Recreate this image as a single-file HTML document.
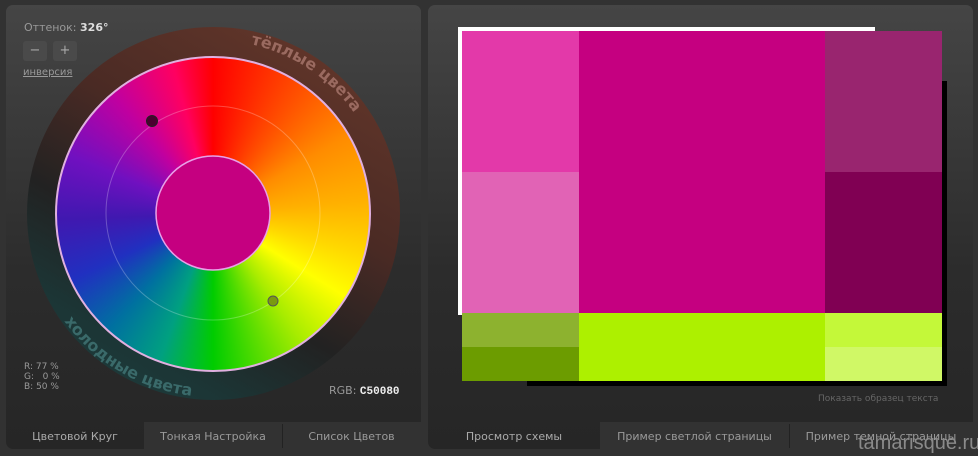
<!DOCTYPE html>
<html><head><meta charset="utf-8"><style>
*{margin:0;padding:0;box-sizing:border-box}
body{width:978px;height:456px;background:#323232;position:relative;overflow:hidden;font-family:"DejaVu Sans","Liberation Sans",sans-serif}
.panel{position:absolute;top:5px;border-radius:7px;background:linear-gradient(#454545,#2c2c2c 60%,#262626)}
.abs{position:absolute}
.tab{position:absolute;top:422px;height:27px;font-size:11px;color:#9a9a9a;text-align:center;line-height:29px}
.btn{position:absolute;top:41px;width:24px;height:20px;background:#4a4a4a;border-radius:3px;color:#aaa;font-size:13px;text-align:center;line-height:20px}
</style></head><body>
<div class="panel" style="left:6px;width:415px;height:444px"></div>
<div class="panel" style="left:428px;width:545px;height:444px"></div>

<div class="abs" style="left:144px;top:422px;width:277px;height:30px;background:#323232"></div>
<div class="abs" style="left:282px;top:424px;width:1px;height:24px;background:#222"></div>
<div class="tab" style="left:6px;width:138px;color:#aaa">Цветовой Круг</div>
<div class="tab" style="left:144px;width:138px">Тонкая Настройка</div>
<div class="tab" style="left:282px;width:139px">Список Цветов</div>
<div class="abs" style="left:600px;top:422px;width:373px;height:30px;background:#323232"></div>
<div class="abs" style="left:789px;top:424px;width:1px;height:24px;background:#222"></div>
<div class="tab" style="left:428px;width:172px;color:#aaa">Просмотр схемы</div>
<div class="tab" style="left:600px;width:189px">Пример светлой страницы</div>
<div class="tab" style="left:789px;width:184px">Пример темной страницы</div>
<div class="abs" style="left:858px;top:432px;font-size:20px;color:#8a8a8a;font-family:'Liberation Sans',sans-serif">tamarisque.ru</div>

<div class="abs" style="left:24px;top:21px;font-size:11px;color:#999">Оттенок: <b style="color:#ddd">326°</b></div>
<div class="btn" style="left:23px">−</div>
<div class="btn" style="left:53px">+</div>
<div class="abs" style="left:23px;top:67px;font-size:10px;color:#999;text-decoration:underline">инверсия</div>
<div class="abs" style="left:24px;top:362px;font-size:9px;color:#999;line-height:10px;white-space:pre;font-family:'DejaVu Sans',sans-serif">R: 77 %
G:   0 %
B: 50 %</div>
<div class="abs" style="left:329px;top:384px;font-size:11px;color:#999">RGB: <b style="color:#eee;font-family:'Liberation Mono',monospace">C50080</b></div>

<div class="abs" style="left:27px;top:27px;width:373px;height:373px;border-radius:50%;background:linear-gradient(210deg,#6a3a2c 0%,#4a2a24 40%,#222 62%,#1c3535 80%,#1e4040 100%)"></div>
<div class="abs" style="left:55px;top:56px;width:316px;height:316px;border-radius:50%;border:2px solid #e0b0e0;background:conic-gradient(#ff0000 0deg,#ff5000 35deg,#ff8c00 60deg,#ffb000 85deg,#ffd800 105deg,#ffff00 122deg,#a8ec00 145deg,#00cc00 180deg,#00a080 200deg,#0070a0 222deg,#2030c0 245deg,#4018b0 268deg,#7010c0 292deg,#c000a0 320deg,#ff0060 345deg,#ff0000 360deg)"></div>
<svg class="abs" style="left:0;top:0" width="430" height="456">
<circle cx="213" cy="213" r="107" fill="none" stroke="rgba(255,255,255,0.25)" stroke-width="1"/>
<circle cx="213" cy="213" r="57" fill="#c50080" stroke="#e8a0e8" stroke-width="1.5"/>
<circle cx="152" cy="121" r="5.5" fill="#4a0030" stroke="#222" stroke-width="1"/>
<circle cx="273" cy="301" r="5" fill="#7a9a10" stroke="#555" stroke-width="1"/>
<defs>
<path id="top" d="M 40 213 A 173 173 0 0 1 386 213"/>
<path id="bot" d="M 29 213 A 184 184 0 0 0 397 213"/>
</defs>
<text font-size="16" font-weight="bold" fill="#9a6a60" font-family="DejaVu Sans,sans-serif"><textPath href="#top" startOffset="57%">тёплые цвета</textPath></text>
<text font-size="16" font-weight="bold" fill="#3a6a6a" font-family="DejaVu Sans,sans-serif"><textPath href="#bot" startOffset="20%">холодные цвета</textPath></text>
</svg>

<div class="abs" style="left:458px;top:27px;width:417px;height:288px;background:#fff"></div>
<div class="abs" style="left:527px;top:81px;width:420px;height:305px;background:#000"></div>
<div class="abs" style="left:462px;top:31px;width:117px;height:141px;background:#e339a9"></div>
<div class="abs" style="left:462px;top:172px;width:117px;height:141px;background:#e163b5"></div>
<div class="abs" style="left:579px;top:31px;width:246px;height:282px;background:#c50080"></div>
<div class="abs" style="left:825px;top:31px;width:117px;height:141px;background:#99256f"></div>
<div class="abs" style="left:825px;top:172px;width:117px;height:141px;background:#800053"></div>
<div class="abs" style="left:462px;top:313px;width:117px;height:34px;background:#8db22f"></div>
<div class="abs" style="left:462px;top:347px;width:117px;height:34px;background:#6c9c00"></div>
<div class="abs" style="left:579px;top:313px;width:246px;height:68px;background:#adf000"></div>
<div class="abs" style="left:825px;top:313px;width:117px;height:34px;background:#c4f839"></div>
<div class="abs" style="left:825px;top:347px;width:117px;height:34px;background:#d0f866"></div>
<div class="abs" style="left:818px;top:394px;font-size:9px;color:#666">Показать образец текста</div>
</body></html>
